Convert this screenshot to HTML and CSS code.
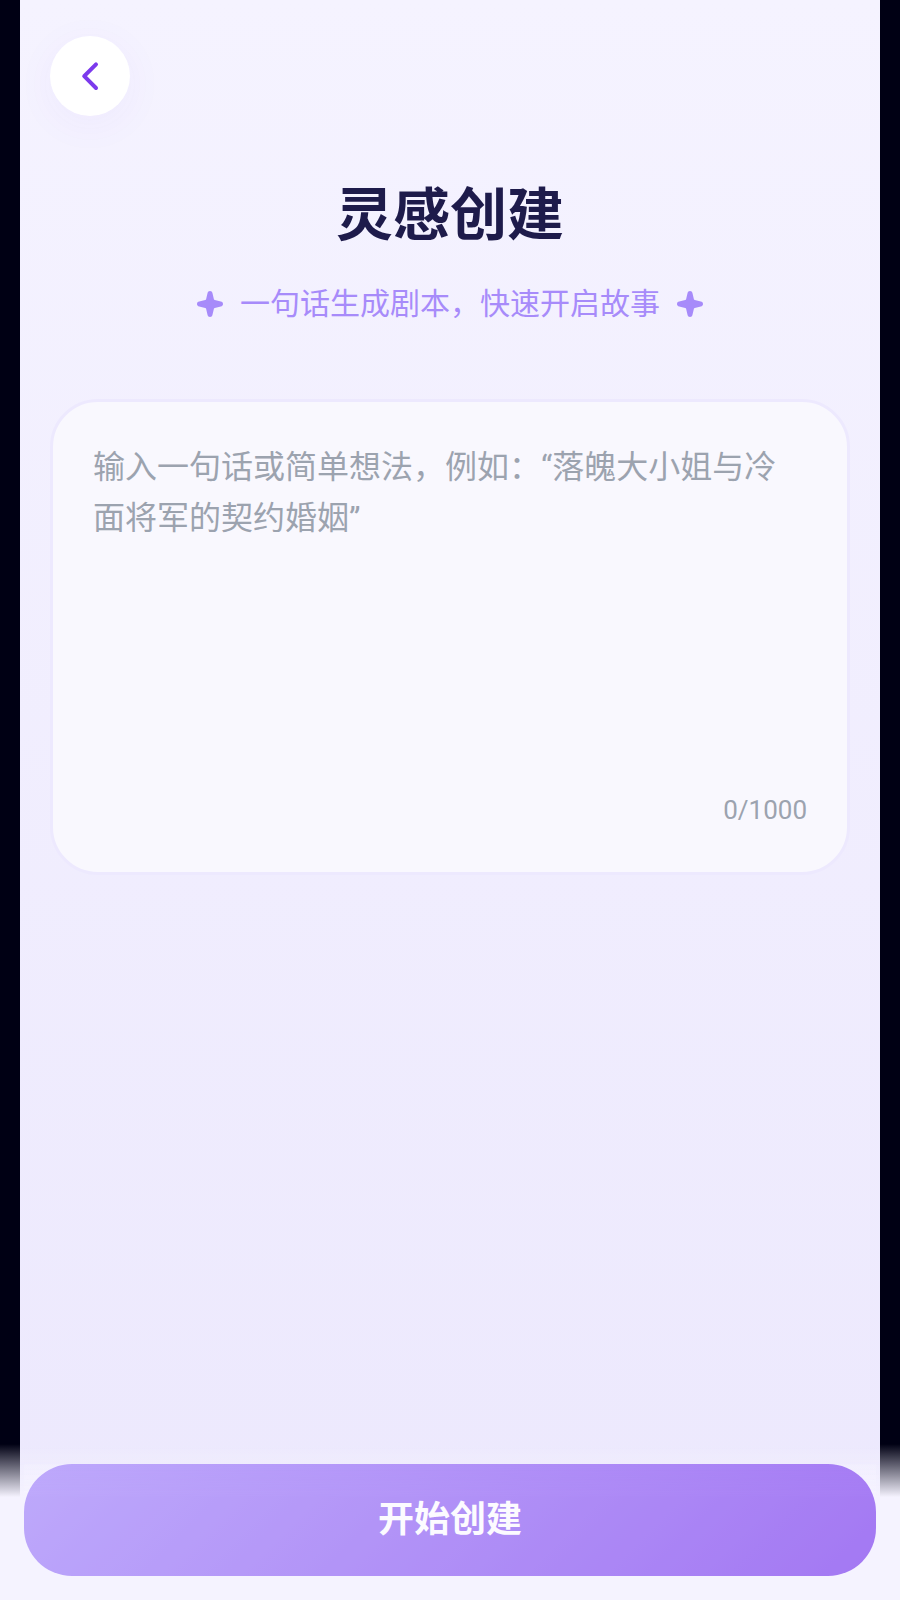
FILE: index.html
```html
<!DOCTYPE html>
<html lang="zh-CN">
<head>
  <meta charset="UTF-8">
  <meta name="viewport" content="width=device-width, initial-scale=1.0">
  <title>灵感创建</title>
  <link rel="stylesheet" href="styles.css">
</head>
<body>
  <div class="page">
    <header class="nav">
      <button type="button" class="back" aria-label="返回">
        <svg width="40" height="40" viewBox="0 0 40 40" fill="none" stroke="currentColor" stroke-width="4" stroke-linecap="round" stroke-linejoin="round">
          <path d="M26 8.300 14.200 20.200 26 32"/>
        </svg>
      </button>
    </header>

    <main class="content">
      <h1>灵感创建</h1>
      <p class="subtitle">
        <svg class="star" viewBox="0 0 28 28" aria-hidden="true"><path d="M14 1c1.300 0 2.200.8 2.500 2.200l1.400 6c.2.500.5.700.9.800l6 1.500c1.400.3 2.200 1.200 2.200 2.500s-.8 2.200-2.200 2.500l-6 1.500c-.5.100-.8.400-.9.800l-1.400 6C16.200 26.200 15.300 27 14 27s-2.200-.8-2.500-2.200l-1.400-6c-.1-.4-.4-.7-.9-.8l-6-1.500C1.800 16.200 1 15.300 1 14s.8-2.200 2.200-2.500l6-1.500c.5-.1.800-.3.900-.8l1.400-6C11.800 1.800 12.700 1 14 1z"/></svg>
        <span>一句话生成剧本，快速开启故事</span>
        <svg class="star" viewBox="0 0 28 28" aria-hidden="true"><path d="M14 1c1.300 0 2.200.8 2.500 2.200l1.400 6c.2.500.5.700.9.800l6 1.500c1.400.3 2.200 1.200 2.200 2.500s-.8 2.200-2.200 2.500l-6 1.500c-.5.100-.8.400-.9.800l-1.400 6C16.200 26.200 15.300 27 14 27s-2.200-.8-2.500-2.200l-1.400-6c-.1-.4-.4-.7-.9-.8l-6-1.500C1.800 16.200 1 15.300 1 14s.8-2.200 2.200-2.500l6-1.500c.5-.1.800-.3.900-.8l1.400-6C11.800 1.800 12.700 1 14 1z"/></svg>
      </p>

      <form id="createForm" class="input-card">
        <textarea id="idea" maxlength="1000" aria-label="故事想法" placeholder="输入一句话或简单想法，例如：“落魄大小姐与冷面将军的契约婚姻”"></textarea>
        <div class="counter"><span id="count">0</span>/1000</div>
      </form>
    </main>
  </div>

  <footer class="footer">
    <button type="submit" form="createForm" id="submitButton" class="submit" disabled>开始创建</button>
  </footer>

  <script>
    const idea = document.getElementById('idea');
    const submitButton = document.getElementById('submitButton');

    idea.addEventListener('input', function() {
      document.getElementById('count').textContent = idea.value.length;
      submitButton.disabled = !idea.value.trim();
    });

    document.getElementById('createForm').addEventListener('submit', function(e) {
      e.preventDefault();
    });
  </script>
</body>
</html>
```
FILE: styles.css
```css
* {
  box-sizing: border-box;
}
body {
  margin: 0;
  background-color: #000014;
  font-family: Roboto, "Noto Sans CJK SC", sans-serif;
}
button, textarea {
  font-family: inherit;
}
.page {
  min-height: 100vh;
  margin: 0 20px;
  padding-bottom: 156px;
  background: linear-gradient(180deg, #f5f3ff 0%, #ece8fd 100%);
}
.nav {
  padding: 36px 30px 0;
}
.back {
  display: flex;
  align-items: center;
  justify-content: center;
  width: 80px;
  height: 80px;
  padding: 0;
  border: none;
  border-radius: 50%;
  background-color: #fff;
  color: #7c3aed;
  box-shadow: 0 8px 40px rgba(124, 58, 237, 0.05);
  cursor: pointer;
}
.content {
  padding: 60px 30px 0;
}
h1 {
  margin: 0;
  text-align: center;
  font-size: 57px;
  line-height: 80px;
  font-weight: bold;
  color: #1e1b4b;
}
.subtitle {
  display: flex;
  align-items: center;
  justify-content: center;
  gap: 16px;
  margin: 24px 0 71px;
  font-size: 30px;
  line-height: 48px;
  color: #a78bfa;
}
.star {
  width: 28px;
  height: 28px;
  fill: #a78bfa;
}
.input-card {
  display: flex;
  flex-direction: column;
  padding: 40px;
  border: 3px solid #ede9fe;
  border-radius: 48px;
  background-color: #f9f8fe;
}
textarea {
  width: 100%;
  height: 346px;
  padding: 0;
  border: none;
  outline: none;
  resize: none;
  background: transparent;
  font-size: 32px;
  line-height: 51px;
  color: #1e1b4b;
}
textarea::placeholder {
  color: #9ca3af;
}
.counter {
  text-align: right;
  font-size: 26px;
  line-height: 44px;
  color: #9ca3af;
}
.footer {
  position: fixed;
  left: 0;
  right: 0;
  bottom: 0;
  padding: 20px 24px 24px;
  background: linear-gradient(180deg, rgba(245, 243, 255, 0) 0%, #f5f3ff 34%);
}
.submit {
  display: block;
  width: 100%;
  height: 112px;
  padding: 0 0 8px;
  border: none;
  border-radius: 48px;
  background: linear-gradient(135deg, #a78bfa 0%, #8144ee 100%);
  font-size: 36px;
  font-weight: bold;
  color: #fff;
  cursor: pointer;
}
.submit:disabled {
  opacity: 0.7;
  cursor: not-allowed;
}
```
